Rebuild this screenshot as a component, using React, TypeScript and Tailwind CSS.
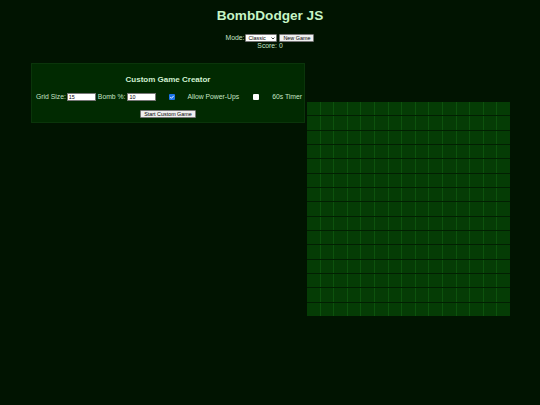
import {useState} from "react";

const SIZE = 15;

function Board() {
    const rows = Array.from({length: SIZE}, (_, r) => r);
    const cols = Array.from({length: SIZE}, (_, c) => c);
    return (
        <div className="mt-[39px] ml-[2px] flex h-[214px] w-[203px] flex-col gap-[1px] bg-[#021f02]">
            {rows.map((r) => (
                <div key={r} className="grid flex-1 grid-cols-[repeat(15,1fr)] gap-x-[1px] bg-[#0d520d]">
                    {cols.map((c) => (
                        <div key={c} className="bg-[#053c05]"/>
                    ))}
                </div>
            ))}
        </div>
    );
}

function Check({checked, onChange, className}: {checked: boolean; onChange: (v: boolean) => void; className: string}) {
    return (
        <button
            type="button"
            onClick={() => onChange(!checked)}
            className={`relative h-[6px] w-[6px] rounded-[1px] ${checked ? "bg-[#1a73e8]" : "bg-white"} ${className}`}
        >
            {checked && (
                <svg className="absolute inset-0 h-[6px] w-[6px]" viewBox="0 0 12 12" fill="none">
                    <path d="M2.5 6.2l2.4 2.4 4.6-5" stroke="#fff" strokeWidth="1.8"/>
                </svg>
            )}
        </button>
    );
}

export default function App() {
    const [mode, setMode] = useState("classic");
    const [gridSize, setGridSize] = useState("15");
    const [bombPct, setBombPct] = useState("10");
    const [powerUps, setPowerUps] = useState(true);
    const [timer, setTimer] = useState(false);

    return (
        <div className="min-h-screen bg-[#011401] font-['Liberation_Sans',Arial,sans-serif] text-[#c6e4c6]">
            <h1 className="pt-[8px] text-center text-[13.6px] font-bold leading-[16px] text-[#c6f5c6]">BombDodger JS</h1>

            <div className="mt-[10px] flex h-[8px] items-center justify-center text-[6.8px] leading-[8px]">
                <span>Mode:</span>
                <div className="relative ml-[1px] h-[8px] w-[32px]">
                    <select
                        value={mode}
                        onChange={(e) => setMode(e.target.value)}
                        className="h-[8px] w-[32px] appearance-none rounded-[1px] border-[0.5px] border-[#767676] bg-white pl-[2px] text-[5.4px] leading-[7px] text-black outline-none"
                    >
                        <option value="classic">Classic</option>
                        <option value="timed">Timed</option>
                    </select>
                    <svg className="pointer-events-none absolute right-[2px] top-[2.5px] h-[3px] w-[4px]" viewBox="0 0 8 6" fill="none">
                        <path d="M1 1l3 3 3-3" stroke="#111" strokeWidth="1.6"/>
                    </svg>
                </div>
                <button className="ml-[2px] h-[8px] w-[35px] rounded-[1px] border-[0.5px] border-[#767676] bg-[#efefef] text-[5.4px] leading-[7px] text-black">
                    New Game
                </button>
            </div>
            <div className="text-center text-[6.8px] leading-[8.5px]">Score: 0</div>

            <div className="mt-[12.5px] flex items-start">
                <div className="ml-[31px] h-[60px] w-[274px] border border-[#0a350a] bg-[#012a01]">
                    <h3 className="pt-[11px] text-center text-[8px] font-bold leading-[10px] text-[#d0f0d0]">Custom Game Creator</h3>
                    <div className="mt-[7px] flex h-[9px] items-center pl-[4px] text-[6.8px] leading-[9px]">
                        <span>Grid Size:</span>
                        <input
                            type="text"
                            value={gridSize}
                            onChange={(e) => setGridSize(e.target.value)}
                            className="ml-[1px] h-[8px] w-[29px] border-[0.5px] border-[#767676] bg-white px-[1px] text-[5.4px] leading-[7px] text-black outline-none"
                        />
                        <span className="ml-[2px]">Bomb %:</span>
                        <input
                            type="text"
                            value={bombPct}
                            onChange={(e) => setBombPct(e.target.value)}
                            className="ml-[2px] h-[8px] w-[29px] border-[0.5px] border-[#767676] bg-white px-[1px] text-[5.4px] leading-[7px] text-black outline-none"
                        />
                        <Check checked={powerUps} onChange={setPowerUps} className="ml-[13px]"/>
                        <span className="ml-[12px]">Allow Power-Ups</span>
                        <Check checked={timer} onChange={setTimer} className="ml-[14px]"/>
                        <span className="ml-[13px]">60s Timer</span>
                    </div>
                    <div className="mt-[9px] flex justify-center">
                        <button className="h-[8px] w-[56px] rounded-[1px] border-[0.5px] border-[#767676] bg-[#efefef] text-[5.4px] leading-[7px] text-black">
                            Start Custom Game
                        </button>
                    </div>
                </div>
                <Board/>
            </div>
        </div>
    );
}
